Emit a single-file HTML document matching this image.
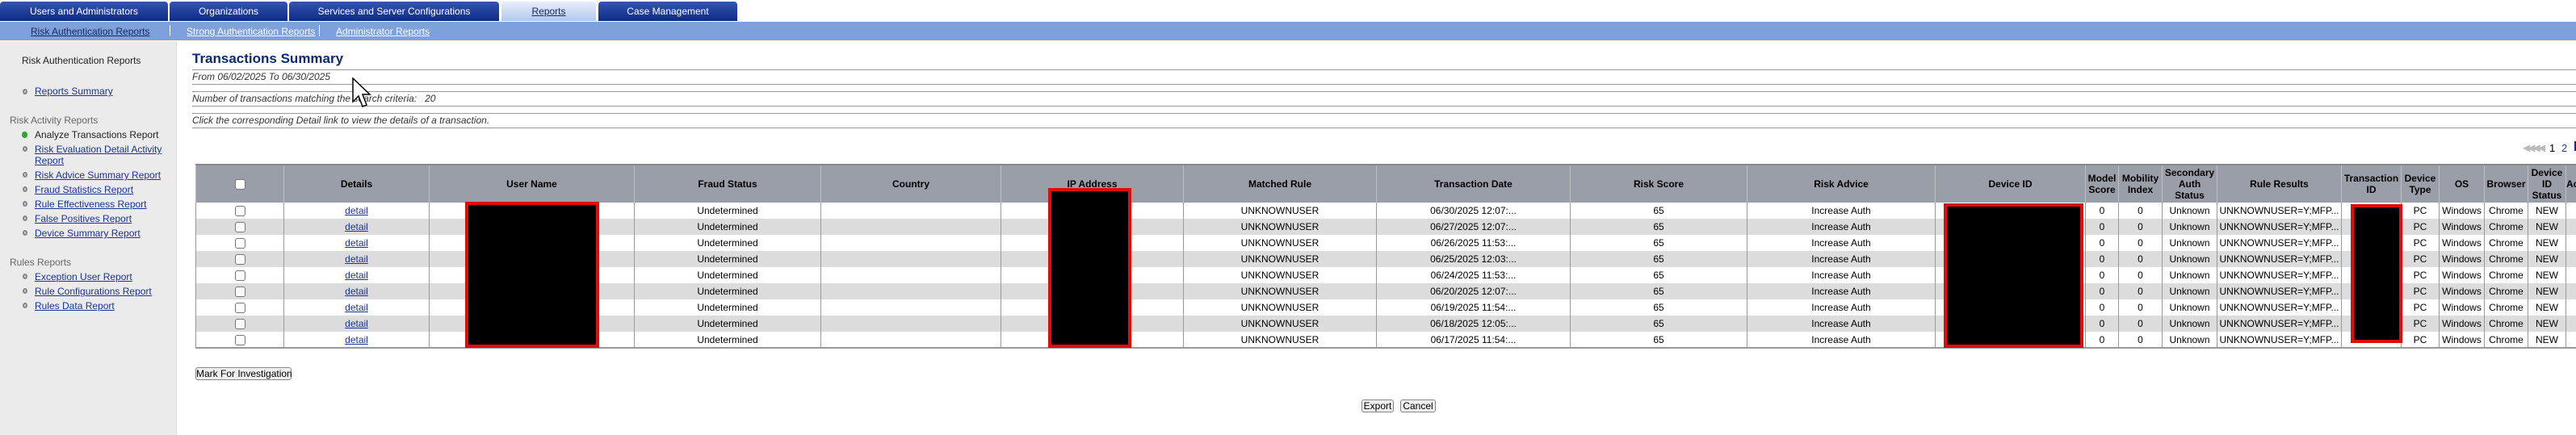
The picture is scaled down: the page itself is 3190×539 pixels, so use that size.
<!DOCTYPE html>
<html><head><meta charset="utf-8">
<style>
*{margin:0;padding:0;box-sizing:border-box}
body{width:3190px;height:539px;overflow:hidden;background:#fff;font-family:"Liberation Sans",Arial,sans-serif;font-size:12px;color:#000;position:relative}
.a{position:absolute;white-space:nowrap}
.tab{position:absolute;top:2px;height:24px;border-radius:4px 4px 0 0;background:linear-gradient(#3556b0,#0c2a86);color:#fff;text-align:center;line-height:24px;font-size:12px}
.tab.on{background:linear-gradient(#e6eefb,#b3c7ee);color:#1a2a5a;text-decoration:underline}
.sub{position:absolute;top:27px;left:0;width:3190px;height:23px;background:#7ea0dc;border-bottom:1px solid #999}
.sub a{position:absolute;top:5px;color:#fff;text-decoration:underline;font-size:12px}
.side{position:absolute;left:0;top:51px;width:219px;height:488px;background:#ebebeb;border-right:1px solid #ddd}
.lk{color:#1a339a;text-decoration:underline}
.b{position:absolute;width:6px;height:7px;border:2px solid #888;border-radius:50%;background:#ccc}
.hl{position:absolute;left:238px;width:2952px;height:0;border-top:1px solid #999}
table{position:absolute;left:242px;top:203px;width:2995px;border-collapse:collapse;table-layout:fixed;border-top:2px solid #888;border-bottom:2px solid #999}
th{background:#9a9ea8;height:47px;font-weight:bold;font-size:12px;border-left:1px solid #c0c0c0;border-right:1px solid #c0c0c0;line-height:14px;overflow:hidden}
td{height:20px;text-align:center;border-left:1px solid #999;border-right:1px solid #999;overflow:hidden;white-space:nowrap;font-size:12px}
tr.g td{background:#dcdcdc}
.cb{display:inline-block;width:13px;height:13px;border:1px solid #777;border-radius:3px;background:#fff;vertical-align:middle}
.red{position:absolute;background:#000;border:4px solid #e00c0c}
.btn{position:absolute;border:1px solid #888;border-radius:3px;background:#efefef;font-size:12px;text-align:center;line-height:14px;white-space:nowrap}
</style></head><body>
<div class="tab" style="left:0;width:208px">Users and Administrators</div>
<div class="tab" style="left:210px;width:146px">Organizations</div>
<div class="tab" style="left:358px;width:260px">Services and Server Configurations</div>
<div class="tab on" style="left:621px;width:117px">Reports</div>
<div class="tab" style="left:741px;width:172px">Case Management</div>
<div class="sub">
<a style="left:38px;color:#1a2a5a">Risk Authentication Reports</a>
<div class="a" style="left:210px;top:4px;width:1px;height:14px;background:#fff"></div>
<a style="left:231px">Strong Authentication Reports</a>
<div class="a" style="left:395px;top:4px;width:1px;height:14px;background:#fff"></div>
<a style="left:416px">Administrator Reports</a>
</div>
<div class="side">
<div class="a" style="left:27px;top:17px;font-size:12px;color:#222">Risk Authentication Reports</div>
<div class="b" style="left:28px;top:59px"></div><div class="a lk" style="left:43px;top:55px">Reports Summary</div>
<div class="a" style="left:12px;top:91px;color:#666">Risk Activity Reports</div>
<div class="a" style="left:27px;top:112px;width:7px;height:8px;border-radius:50%;background:#2fa52f"></div><div class="a" style="left:43px;top:109px;color:#222">Analyze Transactions Report</div>
<div class="b" style="left:28px;top:130px"></div><div class="a lk" style="left:43px;top:127px">Risk Evaluation Detail Activity</div><div class="a lk" style="left:43px;top:141px">Report</div>
<div class="b" style="left:28px;top:162px"></div><div class="a lk" style="left:43px;top:159px">Risk Advice Summary Report</div>
<div class="b" style="left:28px;top:180px"></div><div class="a lk" style="left:43px;top:177px">Fraud Statistics Report</div>
<div class="b" style="left:28px;top:198px"></div><div class="a lk" style="left:43px;top:195px">Rule Effectiveness Report</div>
<div class="b" style="left:28px;top:216px"></div><div class="a lk" style="left:43px;top:213px">False Positives Report</div>
<div class="b" style="left:28px;top:234px"></div><div class="a lk" style="left:43px;top:231px">Device Summary Report</div>
<div class="a" style="left:12px;top:267px;color:#666">Rules Reports</div>
<div class="b" style="left:28px;top:288px"></div><div class="a lk" style="left:43px;top:285px">Exception User Report</div>
<div class="b" style="left:28px;top:306px"></div><div class="a lk" style="left:43px;top:303px">Rule Configurations Report</div>
<div class="b" style="left:28px;top:324px"></div><div class="a lk" style="left:43px;top:321px">Rules Data Report</div>
</div>
<div class="a" style="left:238px;top:63px;font-size:17px;font-weight:bold;color:#0c2a6e">Transactions Summary</div>
<div class="hl" style="top:86px"></div>
<div class="a" style="left:238px;top:88px;font-style:italic;color:#333">From 06/02/2025 To 06/30/2025</div>
<div class="hl" style="top:104px"></div>
<div class="hl" style="top:113px"></div>
<div class="a" style="left:238px;top:115px;font-style:italic;color:#333">Number of transactions matching the search criteria:&nbsp;&nbsp; 20</div>
<div class="hl" style="top:131px"></div>
<div class="hl" style="top:140px"></div>
<div class="a" style="left:238px;top:142px;font-style:italic;color:#333">Click the corresponding Detail link to view the details of a transaction.</div>
<div class="hl" style="top:158px"></div>
<svg class="a" style="left:436px;top:96px" width="24" height="38" viewBox="0 0 24 38"><path d="M1 1 L1 30 L8 23 L13 36 L18 34 L13 21 L22 21 Z" fill="#fff" stroke="#000" stroke-width="1.5"/></svg>
<div class="a" style="left:3124px;top:176px;color:#bbb;font-size:12px;letter-spacing:-3px">◀◀◀ ◀</div>
<div class="a" style="left:3157px;top:176px;font-size:13px">1</div>
<div class="a" style="left:3172px;top:176px;font-size:13px;color:#23449a">2</div>
<div class="a" style="left:3188px;top:175px;width:3px;height:12px;background:#1a2a8a"></div>
<table>
<colgroup><col style="width:109px"><col style="width:180px"><col style="width:254px"><col style="width:231px"><col style="width:223px"><col style="width:226px"><col style="width:239px"><col style="width:240px"><col style="width:219px"><col style="width:233px"><col style="width:186px"><col style="width:41px"><col style="width:54px"><col style="width:68px"><col style="width:154px"><col style="width:74px"><col style="width:47px"><col style="width:56px"><col style="width:54px"><col style="width:47px"><col style="width:60px"></colgroup>
<tr><th><span class="cb"></span></th><th>Details</th><th>User Name</th><th>Fraud Status</th><th>Country</th><th>IP Address</th><th>Matched Rule</th><th>Transaction Date</th><th>Risk Score</th><th>Risk Advice</th><th>Device ID</th><th>Model Score</th><th>Mobility Index</th><th>Secondary Auth Status</th><th>Rule Results</th><th>Transaction ID</th><th>Device Type</th><th>OS</th><th>Browser</th><th>Device ID Status</th><th style="text-align:left">Ac</th></tr>
<tr><td><span class="cb"></span></td><td><span class="lk">detail</span></td><td></td><td>Undetermined</td><td></td><td></td><td>UNKNOWNUSER</td><td>06/30/2025 12:07:...</td><td>65</td><td>Increase Auth</td><td></td><td>0</td><td>0</td><td>Unknown</td><td>UNKNOWNUSER=Y;MFP...</td><td></td><td>PC</td><td>Windows</td><td>Chrome</td><td>NEW</td><td></td></tr>
<tr class="g"><td><span class="cb"></span></td><td><span class="lk">detail</span></td><td></td><td>Undetermined</td><td></td><td></td><td>UNKNOWNUSER</td><td>06/27/2025 12:07:...</td><td>65</td><td>Increase Auth</td><td></td><td>0</td><td>0</td><td>Unknown</td><td>UNKNOWNUSER=Y;MFP...</td><td></td><td>PC</td><td>Windows</td><td>Chrome</td><td>NEW</td><td></td></tr>
<tr><td><span class="cb"></span></td><td><span class="lk">detail</span></td><td></td><td>Undetermined</td><td></td><td></td><td>UNKNOWNUSER</td><td>06/26/2025 11:53:...</td><td>65</td><td>Increase Auth</td><td></td><td>0</td><td>0</td><td>Unknown</td><td>UNKNOWNUSER=Y;MFP...</td><td></td><td>PC</td><td>Windows</td><td>Chrome</td><td>NEW</td><td></td></tr>
<tr class="g"><td><span class="cb"></span></td><td><span class="lk">detail</span></td><td></td><td>Undetermined</td><td></td><td></td><td>UNKNOWNUSER</td><td>06/25/2025 12:03:...</td><td>65</td><td>Increase Auth</td><td></td><td>0</td><td>0</td><td>Unknown</td><td>UNKNOWNUSER=Y;MFP...</td><td></td><td>PC</td><td>Windows</td><td>Chrome</td><td>NEW</td><td></td></tr>
<tr><td><span class="cb"></span></td><td><span class="lk">detail</span></td><td></td><td>Undetermined</td><td></td><td></td><td>UNKNOWNUSER</td><td>06/24/2025 11:53:...</td><td>65</td><td>Increase Auth</td><td></td><td>0</td><td>0</td><td>Unknown</td><td>UNKNOWNUSER=Y;MFP...</td><td></td><td>PC</td><td>Windows</td><td>Chrome</td><td>NEW</td><td></td></tr>
<tr class="g"><td><span class="cb"></span></td><td><span class="lk">detail</span></td><td></td><td>Undetermined</td><td></td><td></td><td>UNKNOWNUSER</td><td>06/20/2025 12:07:...</td><td>65</td><td>Increase Auth</td><td></td><td>0</td><td>0</td><td>Unknown</td><td>UNKNOWNUSER=Y;MFP...</td><td></td><td>PC</td><td>Windows</td><td>Chrome</td><td>NEW</td><td></td></tr>
<tr><td><span class="cb"></span></td><td><span class="lk">detail</span></td><td></td><td>Undetermined</td><td></td><td></td><td>UNKNOWNUSER</td><td>06/19/2025 11:54:...</td><td>65</td><td>Increase Auth</td><td></td><td>0</td><td>0</td><td>Unknown</td><td>UNKNOWNUSER=Y;MFP...</td><td></td><td>PC</td><td>Windows</td><td>Chrome</td><td>NEW</td><td></td></tr>
<tr class="g"><td><span class="cb"></span></td><td><span class="lk">detail</span></td><td></td><td>Undetermined</td><td></td><td></td><td>UNKNOWNUSER</td><td>06/18/2025 12:05:...</td><td>65</td><td>Increase Auth</td><td></td><td>0</td><td>0</td><td>Unknown</td><td>UNKNOWNUSER=Y;MFP...</td><td></td><td>PC</td><td>Windows</td><td>Chrome</td><td>NEW</td><td></td></tr>
<tr><td><span class="cb"></span></td><td><span class="lk">detail</span></td><td></td><td>Undetermined</td><td></td><td></td><td>UNKNOWNUSER</td><td>06/17/2025 11:54:...</td><td>65</td><td>Increase Auth</td><td></td><td>0</td><td>0</td><td>Unknown</td><td>UNKNOWNUSER=Y;MFP...</td><td></td><td>PC</td><td>Windows</td><td>Chrome</td><td>NEW</td><td></td></tr>
</table>
<div class="red" style="left:576px;top:250px;width:166px;height:181px"></div>
<div class="red" style="left:1298px;top:233px;width:103px;height:198px"></div>
<div class="red" style="left:2407px;top:252px;width:173px;height:179px"></div>
<div class="red" style="left:2911px;top:253px;width:64px;height:172px"></div>
<div class="btn" style="left:242px;top:455px;width:119px;height:16px">Mark For Investigation</div>
<div class="btn" style="left:1686px;top:495px;width:40px;height:16px">Export</div>
<div class="btn" style="left:1734px;top:495px;width:44px;height:16px">Cancel</div>
</body></html>
